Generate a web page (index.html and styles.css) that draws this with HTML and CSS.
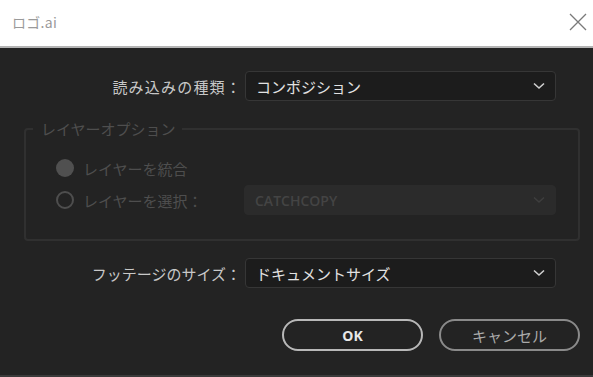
FILE: index.html
```html
<!DOCTYPE html>
<html lang="ja">
<head>
<meta charset="utf-8">
<link rel="stylesheet" href="styles.css">
</head>
<body>
<div class="window">
  <div class="titlebar">
    <span class="title">ロゴ.ai</span>
    <svg class="close" width="18" height="18" viewBox="0 0 18 18"><path d="M1 1L17 17M17 1L1 17" stroke="#7a7a7a" stroke-width="1.3" fill="none"/></svg>
  </div>
  <div class="body">
    <div class="row first">
      <span class="label wide">読み込みの種類：</span>
      <div class="select"><span>コンポジション</span><svg class="chev" width="12" height="8" viewBox="0 0 12 8"><path d="M1 1.5L6 6L11 1.5" stroke="#cfcfcf" stroke-width="1.6" fill="none"/></svg></div>
    </div>
    <fieldset class="group">
      <legend>レイヤーオプション</legend>
      <div class="radio-row">
        <span class="radio filled"></span><span class="dlabel">レイヤーを統合</span>
      </div>
      <div class="radio-row">
        <span class="radio ring"></span><span class="dlabel sel-label">レイヤーを選択：</span>
        <div class="select disabled"><span>CATCHCOPY</span><svg class="chev" width="12" height="8" viewBox="0 0 12 8"><path d="M1 1.5L6 6L11 1.5" stroke="#3e3e3e" stroke-width="1.6" fill="none"/></svg></div>
      </div>
    </fieldset>
    <div class="row third">
      <span class="label">フッテージのサイズ：</span>
      <div class="select"><span>ドキュメントサイズ</span><svg class="chev" width="12" height="8" viewBox="0 0 12 8"><path d="M1 1.5L6 6L11 1.5" stroke="#cfcfcf" stroke-width="1.6" fill="none"/></svg></div>
    </div>
    <div class="buttons">
      <button class="btn ok">OK</button>
      <button class="btn cancel">キャンセル</button>
    </div>
  </div>
  <div class="bottomline"></div>
</div>
</body>
</html>
```
FILE: styles.css
```css
* { box-sizing: border-box; }
html, body { margin: 0; padding: 0; }
body {
  width: 593px;
  height: 377px;
  overflow: hidden;
  background: #232323;
  font-family: "Noto Sans CJK JP", "Noto Sans", sans-serif;
}
.window { width: 593px; height: 377px; display: flex; flex-direction: column; }
.titlebar {
  height: 48px;
  background: #ffffff;
  border-bottom: 2px solid #b4b4b4;
  display: flex;
  align-items: center;
  justify-content: space-between;
  padding: 0 6px 2px 12px;
}
.title { color: #9a9a9a; font-size: 14px; letter-spacing: 0.3px; }
.body { flex: 1; background: #232323; padding: 0 13px 0 24px; display: flex; flex-direction: column; }
.row { display: flex; align-items: center; height: 30px; }
.row.first { margin-top: 23px; }
.row.third { margin-top: 17px; }
.label {
  width: 221px;
  text-align: right;
  color: #c8c8c8;
  font-size: 15px;
  padding-right: 4px;
}
.label.wide { letter-spacing: 1.2px; padding-right: 3px; }
.select {
  width: 311px;
  height: 30px;
  background: #1c1c1c;
  border: 1px solid #363636;
  border-radius: 4px;
  display: flex;
  align-items: center;
  justify-content: space-between;
  padding: 0 10px 0 10px;
  color: #e2e2e2;
  font-size: 15px;
}
.group {
  margin: 17px 0 0 0;
  width: 556px;
  height: 123px;
  border: 2px solid #303030;
  border-radius: 4px;
  padding: 14px 0 0 30px;
}
.group legend {
  color: #4e4e4e;
  font-size: 15px;
  padding: 0 6px 0 8px;
  margin-left: -23px;
}
.radio-row { display: flex; align-items: center; height: 30px; }
.radio-row + .radio-row { margin-top: 2px; }
.radio {
  width: 18px; height: 18px; border-radius: 50%;
  margin-right: 9px;
  flex: none;
}
.radio.filled { background: #505050; }
.radio.ring { border: 2.5px solid #4e4e4e; }
.dlabel { color: #4e4e4e; font-size: 15px; }
.sel-label { width: 161px; }
.select.disabled {
  width: 312px;
  background: #2b2b2b;
  border-color: #2b2b2b;
  color: #444444;
  font-family: "Open Sans", "Noto Sans", sans-serif;
  font-size: 14px;
  font-weight: 600;
}
.buttons { display: flex; justify-content: flex-end; gap: 16px; margin-top: 31px; }
.btn {
  width: 141px;
  height: 32px;
  border-radius: 16px;
  background: transparent;
  border: 2px solid #b8b8b8;
  font-family: "Noto Sans CJK JP", "Noto Sans", sans-serif;
  font-size: 15px;
  padding: 0;
}
.btn.ok { color: #e8e8e8; font-family: "Open Sans", sans-serif; font-weight: 700; font-size: 14px; }
.btn.cancel { border-color: #8a8a8a; color: #aaaaaa; }
.bottomline { height: 2px; background: #3a3a3a; }
```
